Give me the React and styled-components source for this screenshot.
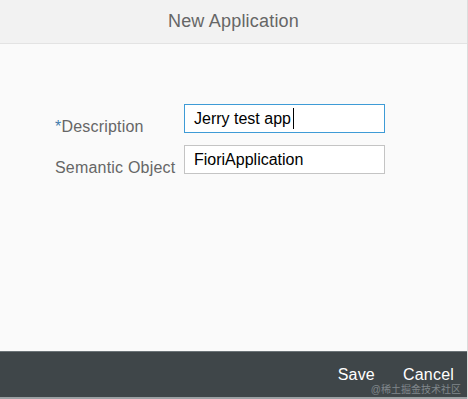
import React from "react";
import styled, { createGlobalStyle } from "styled-components";

const GlobalStyle = createGlobalStyle`
  html, body {
    margin: 0;
    padding: 0;
    background: #ffffff;
  }
  body {
    font-family: "Liberation Sans", Arial, sans-serif;
  }
`;

const Dialog = styled.div`
  width: 467px;
  height: 399px;
  border-right: 1px solid #dcdcdc;
  display: flex;
  flex-direction: column;
  background: #fafafa;
`;

const Header = styled.div`
  height: 43px;
  flex: none;
  background: #f2f2f2;
  border-bottom: 1px solid #e3e3e3;
  display: flex;
  align-items: center;
  justify-content: center;
`;

const Title = styled.div`
  font-size: 18px;
  letter-spacing: 0.2px;
  color: #666666;
`;

const Content = styled.div`
  flex: 1;
  padding: 60px 0 0 55px;
`;

const Form = styled.div`
  display: grid;
  grid-template-columns: 129px 201px;
  row-gap: 12px;
`;

const Label = styled.label`
  font-size: 16px;
  line-height: 18px;
  padding-top: 14px;
  margin-bottom: -3px;
  letter-spacing: 0.2px;
  color: #666666;
  white-space: nowrap;
`;

const Required = styled.span`
  color: #427cac;
`;

const Field = styled.div`
  box-sizing: border-box;
  height: 29px;
  background: #ffffff;
  border: 1px solid ${({ $focused }) => ($focused ? "#3e9bd6" : "#c4c4c4")};
  padding: 0 9px;
  display: flex;
  align-items: center;
  font-size: 16px;
  color: #000000;
`;

const Caret = styled.span`
  display: inline-block;
  width: 1px;
  height: 21px;
  background: #000000;
  margin-left: 2px;
`;

const Footer = styled.div`
  position: relative;
  height: 45px;
  flex: none;
  background: #3f4649;
  border-top: 1px solid #6b7377;
  border-bottom: 2px solid #9ca1a4;
  display: flex;
  align-items: center;
  justify-content: flex-end;
  gap: 28px;
  padding-right: 13px;
`;

const FooterButton = styled.span`
  font-size: 16px;
  letter-spacing: 0.2px;
  color: #ffffff;
  cursor: pointer;
`;

const Watermark = styled.span`
  position: absolute;
  right: 6px;
  bottom: 1px;
  font-family: "Liberation Sans", "Noto Sans CJK SC", sans-serif;
  font-size: 10px;
  color: #80878b;
`;

export default function App() {
  return (
    <>
      <GlobalStyle />
      <Dialog>
        <Header>
          <Title>New Application</Title>
        </Header>
        <Content>
          <Form>
            <Label>
              <Required>*</Required>Description
            </Label>
            <Field $focused>
              Jerry test app
              <Caret />
            </Field>
            <Label>Semantic Object</Label>
            <Field>FioriApplication</Field>
          </Form>
        </Content>
        <Footer>
          <FooterButton>Save</FooterButton>
          <FooterButton>Cancel</FooterButton>
          <Watermark>@稀土掘金技术社区</Watermark>
        </Footer>
      </Dialog>
    </>
  );
}
